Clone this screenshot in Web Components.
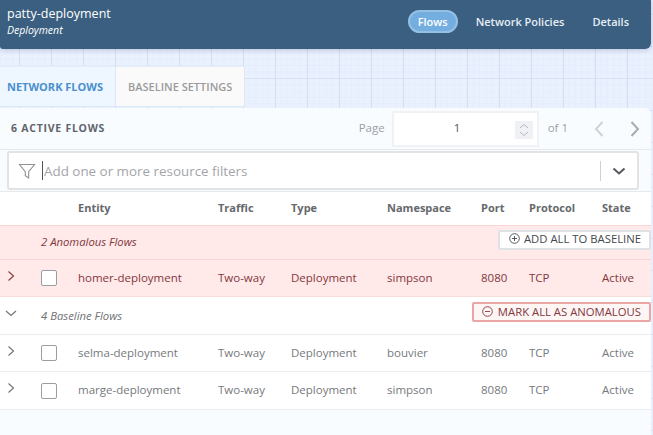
<!DOCTYPE html>
<html>
<head>
<meta charset="utf-8">
<title>Flows</title>
<style>
    html, body {
        margin: 0;
        height: 100%;
        overflow: hidden;
    }
    body {
        font-family: "Open Sans", sans-serif;
        font-size: 11px;
        background-color: #e9f0fe;
        background-image:
            linear-gradient(to right, #d5dfef 1px, transparent 1px),
            linear-gradient(to bottom, #d6e2f6 1px, transparent 1px),
            linear-gradient(to right, #e5ecfb 1px, transparent 1px),
            linear-gradient(to bottom, #e5ecfb 1px, transparent 1px);
        background-size: 32px 32px, 32px 32px, 6.4px 6.4px, 6.4px 6.4px;
        background-position: 19px 0, 0 14px, 19px 0, 0 14px;
    }
</style>
</head>
<body>

<side-panel>
    <panel-header slot="header" name="patty-deployment" kind="Deployment"></panel-header>
    <panel-tabs slot="tabs"></panel-tabs>
    <flows-toolbar></flows-toolbar>
    <filter-box></filter-box>
    <flow-head></flow-head>
    <flow-group tone="red" label="2 Anomalous Flows" action="ADD ALL TO BASELINE" icon="plus"></flow-group>
    <flow-row tone="red" entity="homer-deployment" namespace="simpson"></flow-row>
    <flow-group open label="4 Baseline Flows" action="MARK ALL AS ANOMALOUS" icon="minus"></flow-group>
    <flow-row entity="selma-deployment" namespace="bouvier"></flow-row>
    <flow-row entity="marge-deployment" namespace="simpson"></flow-row>
</side-panel>

<script>
const GRID = 'display: grid; grid-template-columns: 41px 37px 140px 73px 96px 94px 48px 73px 49px; align-items: center;';
const RED_TEXT = '#82383d';

class SidePanel extends HTMLElement {
    constructor() {
        super();
        this.attachShadow({mode: 'open'});
        this.shadowRoot.innerHTML = `
            <style>
                :host {
                    display: flex;
                    flex-direction: column;
                    width: 651px;
                    height: 435px;
                }
                #top {
                    height: 49px;
                    flex: none;
                    margin-bottom: 17px;
                }
                #tabs {
                    height: 41px;
                    flex: none;
                    margin-bottom: 1px;
                }
                #body {
                    flex: 1;
                    background: #f9fcff;
                    border-top-right-radius: 6px;
                }
            </style>
            <div id="top"><slot name="header"></slot></div>
            <div id="tabs"><slot name="tabs"></slot></div>
            <div id="body"><slot></slot></div>
        `;
    }
}

class PanelHeader extends HTMLElement {
    constructor() {
        super();
        this.attachShadow({mode: 'open'});
        this.shadowRoot.innerHTML = `
            <style>
                :host {
                    display: flex;
                    align-items: center;
                    justify-content: space-between;
                    height: 49px;
                    box-sizing: border-box;
                    padding: 0 22px 0 7px;
                    background: #3b5f80;
                    color: #fff;
                    border-bottom-right-radius: 6px;
                    border-bottom-left-radius: 3px;
                    box-shadow: 0 1px 5px rgba(40, 60, 100, 0.25);
                }
                #title {
                    margin-top: -7px;
                    display: flex;
                    flex-direction: column;
                }
                #name {
                    font-size: 12.5px;
                    line-height: 17px;
                }
                #kind {
                    font-size: 10.5px;
                    line-height: 15px;
                    font-style: italic;
                    margin-top: 1px;
                }
                nav {
                    display: flex;
                    align-items: center;
                    margin-top: -6px;
                    font-size: 11px;
                    font-weight: 600;
                    color: #e6eef5;
                }
                #flows {
                    box-sizing: border-box;
                    width: 50px;
                    height: 23px;
                    line-height: 19px;
                    text-align: center;
                    border: 2px solid #95c0e4;
                    border-radius: 12px;
                    background: #74aee0;
                    color: #fff;
                    margin-right: 18px;
                }
                #policies {
                    margin-right: 28px;
                }
            </style>
            <div id="title">
                <span id="name">${this.getAttribute('name')}</span>
                <span id="kind">${this.getAttribute('kind')}</span>
            </div>
            <nav>
                <span id="flows">Flows</span>
                <span id="policies">Network Policies</span>
                <span>Details</span>
            </nav>
        `;
    }
}

class PanelTabs extends HTMLElement {
    constructor() {
        super();
        this.attachShadow({mode: 'open'});
        this.shadowRoot.innerHTML = `
            <style>
                :host {
                    display: flex;
                    height: 41px;
                    font-size: 11px;
                    font-weight: 600;
                }
                div {
                    display: flex;
                    align-items: center;
                    box-sizing: border-box;
                    height: 100%;
                    padding-bottom: 1px;
                    border-top: 1px solid #e3edf9;
                    border-right: 1px solid #dde8f6;
                    border-bottom: 1px solid #dde8f6;
                }
                #active {
                    width: 116px;
                    padding-left: 7px;
                    background: #eef7ff;
                    color: #4a8fce;
                    font-weight: 700;
                }
                #other {
                    width: 129px;
                    padding-left: 12px;
                    background: #fafafa;
                    color: #9a9a9a;
                }
            </style>
            <div id="active">NETWORK FLOWS</div>
            <div id="other">BASELINE SETTINGS</div>
        `;
    }
}

class FlowsToolbar extends HTMLElement {
    constructor() {
        super();
        this.attachShadow({mode: 'open'});
        this.shadowRoot.innerHTML = `
            <style>
                :host {
                    display: flex;
                    align-items: center;
                    height: 41px;
                    box-sizing: border-box;
                    padding: 0 8px 0 11px;
                    font-size: 11.5px;
                    color: #9a9fa6;
                }
                span {
                    margin-top: -2px;
                }
                #count {
                    flex: 1;
                    font-size: 10.5px;
                    font-weight: 700;
                    letter-spacing: 0.75px;
                    color: #60656c;
                }
                #page {
                    position: relative;
                    display: flex;
                    align-items: center;
                    justify-content: center;
                    box-sizing: border-box;
                    width: 147px;
                    height: 36px;
                    margin: 0 9px 0 7px;
                    padding: 0 16px 2px 0;
                    background: #fff;
                    border: 2px solid #f0f2f5;
                    color: #555;
                }
                #spin {
                    position: absolute;
                    right: 4px;
                    top: 8px;
                }
            </style>
            <span id="count">6 ACTIVE FLOWS</span>
            <span>Page</span>
            <div id="page">1
                <svg id="spin" width="18" height="18" viewBox="0 0 18 18" fill="none" stroke="#b4b8be" stroke-width="1">
                    <rect width="18" height="18" fill="#eff1f4" stroke="none"/>
                    <path d="M5 7 9 3.5 13 7M5 11 9 14.5 13 11"/>
                </svg>
            </div>
            <span>of 1</span>
            <svg style="margin-left:20px" width="24" height="18" viewBox="0 0 24 18" fill="none" stroke="#cfd2d6" stroke-width="2"><path d="M14.5 2 8 9 14.5 16"/></svg>
            <svg style="margin-left:13px" width="18" height="18" viewBox="0 0 18 18" fill="none" stroke="#a8acb2" stroke-width="2"><path d="M6.5 2 13 9 6.5 16"/></svg>
        `;
    }
}

class FilterBox extends HTMLElement {
    constructor() {
        super();
        this.attachShadow({mode: 'open'});
        this.shadowRoot.innerHTML = `
            <style>
                :host {
                    display: block;
                    padding: 0 12px 0 7px;
                    border-top: 1px solid #e6e8eb;
                }
                #box {
                    display: flex;
                    align-items: center;
                    box-sizing: border-box;
                    height: 39px;
                    margin-top: 1px;
                    background: #fff;
                    border: 2px solid #e2e3e5;
                    border-radius: 3px;
                    color: #a3a5a9;
                    font-size: 13.4px;
                }
                #funnel {
                    margin: 0 6px 0 9px;
                }
                #caret {
                    width: 1px;
                    height: 19px;
                    background: #555;
                }
                #text {
                    flex: 1;
                    padding-left: 1px;
                }
                #sep {
                    width: 1px;
                    height: 20px;
                    background: #cfd1d4;
                }
                #down {
                    margin: 0 11px 0 11px;
                }
            </style>
            <div id="box">
                <svg id="funnel" width="18" height="18" viewBox="0 0 18 18" fill="none" stroke="#8f9296" stroke-width="1.1">
                    <path d="M1.5 2.5H16.5L10.7 9.6V16L7.3 13.7V9.6Z"/>
                </svg>
                <span id="caret"></span>
                <span id="text">Add one or more resource filters</span>
                <span id="sep"></span>
                <svg id="down" width="14" height="10" viewBox="0 0 14 10" fill="none" stroke="#55585c" stroke-width="2"><path d="M1.5 2.5 7 7.5 12.5 2.5"/></svg>
            </div>
        `;
    }
}

class FlowHead extends HTMLElement {
    constructor() {
        super();
        this.attachShadow({mode: 'open'});
        this.shadowRoot.innerHTML = `
            <style>
                :host {
                    ${GRID}
                    height: 34px;
                    box-sizing: border-box;
                    margin-top: 1px;
                    border-top: 1px solid #e8e9eb;
                    background: #fff;
                    font-size: 11px;
                    font-weight: 700;
                    color: #65686c;
                }
                span {
                    margin-top: -2px;
                }
            </style>
            <span></span><span></span>
            <span>Entity</span><span>Traffic</span><span>Type</span><span>Namespace</span>
            <span>Port</span><span>Protocol</span><span>State</span>
        `;
    }
}

class FlowGroup extends HTMLElement {
    constructor() {
        super();
        this.attachShadow({mode: 'open'});
        const red = this.getAttribute('tone') === 'red';
        const plus = this.getAttribute('icon') === 'plus';
        const chevron = this.hasAttribute('open')
            ? `<svg width="14" height="14" viewBox="0 0 14 14" fill="none" stroke="#6f7276" stroke-width="1.1"><path d="M2 4 7 8.5 12 4"/></svg>`
            : '';
        this.shadowRoot.innerHTML = `
            <style>
                :host {
                    display: flex;
                    align-items: center;
                    box-sizing: border-box;
                    height: ${red ? 35 : 38}px;
                    background: ${red ? '#ffe9e9' : '#fff'};
                    border-top: 1px solid ${red ? '#fbd5d5' : 'transparent'};
                    border-bottom: 1px solid ${red ? '#fbd5d5' : '#ebecee'};
                    font-size: 11.3px;
                    font-style: italic;
                    color: ${red ? RED_TEXT : '#6f7276'};
                }
                #chev {
                    width: 41px;
                    flex: none;
                    display: flex;
                    padding: 0 0 4px 4px;
                    box-sizing: border-box;
                }
                #label {
                    flex: 1;
                    margin-top: -2px;
                }
                button {
                    display: flex;
                    align-items: center;
                    gap: ${plus ? 4 : 5}px;
                    box-sizing: border-box;
                    height: 20px;
                    margin-top: ${red ? -6 : -8}px;
                    padding: 0 8px 2px ${plus ? 9 : 8}px;
                    font: 500 11.3px "Open Sans", sans-serif;
                    color: ${plus ? '#44474c' : RED_TEXT};
                    background: ${plus ? '#fff' : '#fdf6f5'};
                    border: 2px solid ${plus ? '#dfe2e5' : '#eba5a5'};
                    border-radius: 2px;
                }
            </style>
            <div id="chev">${chevron}</div>
            <span id="label">${this.getAttribute('label')}</span>
            <button>
                <svg width="11" height="11" viewBox="0 0 11 11" fill="none" stroke="currentColor" stroke-width="0.9">
                    <circle cx="5.5" cy="5.5" r="4.8"/>
                    <path d="${plus ? 'M3 5.5H8M5.5 3V8' : 'M3 5.5H8'}"/>
                </svg>
                ${this.getAttribute('action')}
            </button>
        `;
    }
}

class FlowRow extends HTMLElement {
    constructor() {
        super();
        this.attachShadow({mode: 'open'});
        const red = this.getAttribute('tone') === 'red';
        this.shadowRoot.innerHTML = `
            <style>
                :host {
                    ${GRID}
                    height: 37px;
                    box-sizing: border-box;
                    background: ${red ? '#ffe9e9' : '#fff'};
                    border-bottom: 1px solid ${red ? '#f7dcdc' : '#ebecee'};
                    font-size: 11.5px;
                    color: ${red ? RED_TEXT : '#76797d'};
                }
                :host(:last-child) {
                    height: 38px;
                }
                span {
                    margin-top: -2px;
                }
                #chev {
                    display: flex;
                    padding: 0 0 5px 7px;
                }
                #check {
                    box-sizing: border-box;
                    width: 16px;
                    height: 16px;
                    background: #fff;
                    border: 1px solid #9a9da1;
                    border-radius: 2px;
                }
            </style>
            <div id="chev">
                <svg width="8" height="12" viewBox="0 0 8 12" fill="none" stroke="${red ? RED_TEXT : '#6f7276'}" stroke-width="1.1"><path d="M1.5 1.5 6.5 6 1.5 10.5"/></svg>
            </div>
            <div><div id="check"></div></div>
            <span>${this.getAttribute('entity')}</span>
            <span>Two-way</span>
            <span>Deployment</span>
            <span>${this.getAttribute('namespace')}</span>
            <span>8080</span>
            <span>TCP</span>
            <span>Active</span>
        `;
    }
}

customElements.define('side-panel', SidePanel);
customElements.define('panel-header', PanelHeader);
customElements.define('panel-tabs', PanelTabs);
customElements.define('flows-toolbar', FlowsToolbar);
customElements.define('filter-box', FilterBox);
customElements.define('flow-head', FlowHead);
customElements.define('flow-group', FlowGroup);
customElements.define('flow-row', FlowRow);
</script>
</body>
</html>
